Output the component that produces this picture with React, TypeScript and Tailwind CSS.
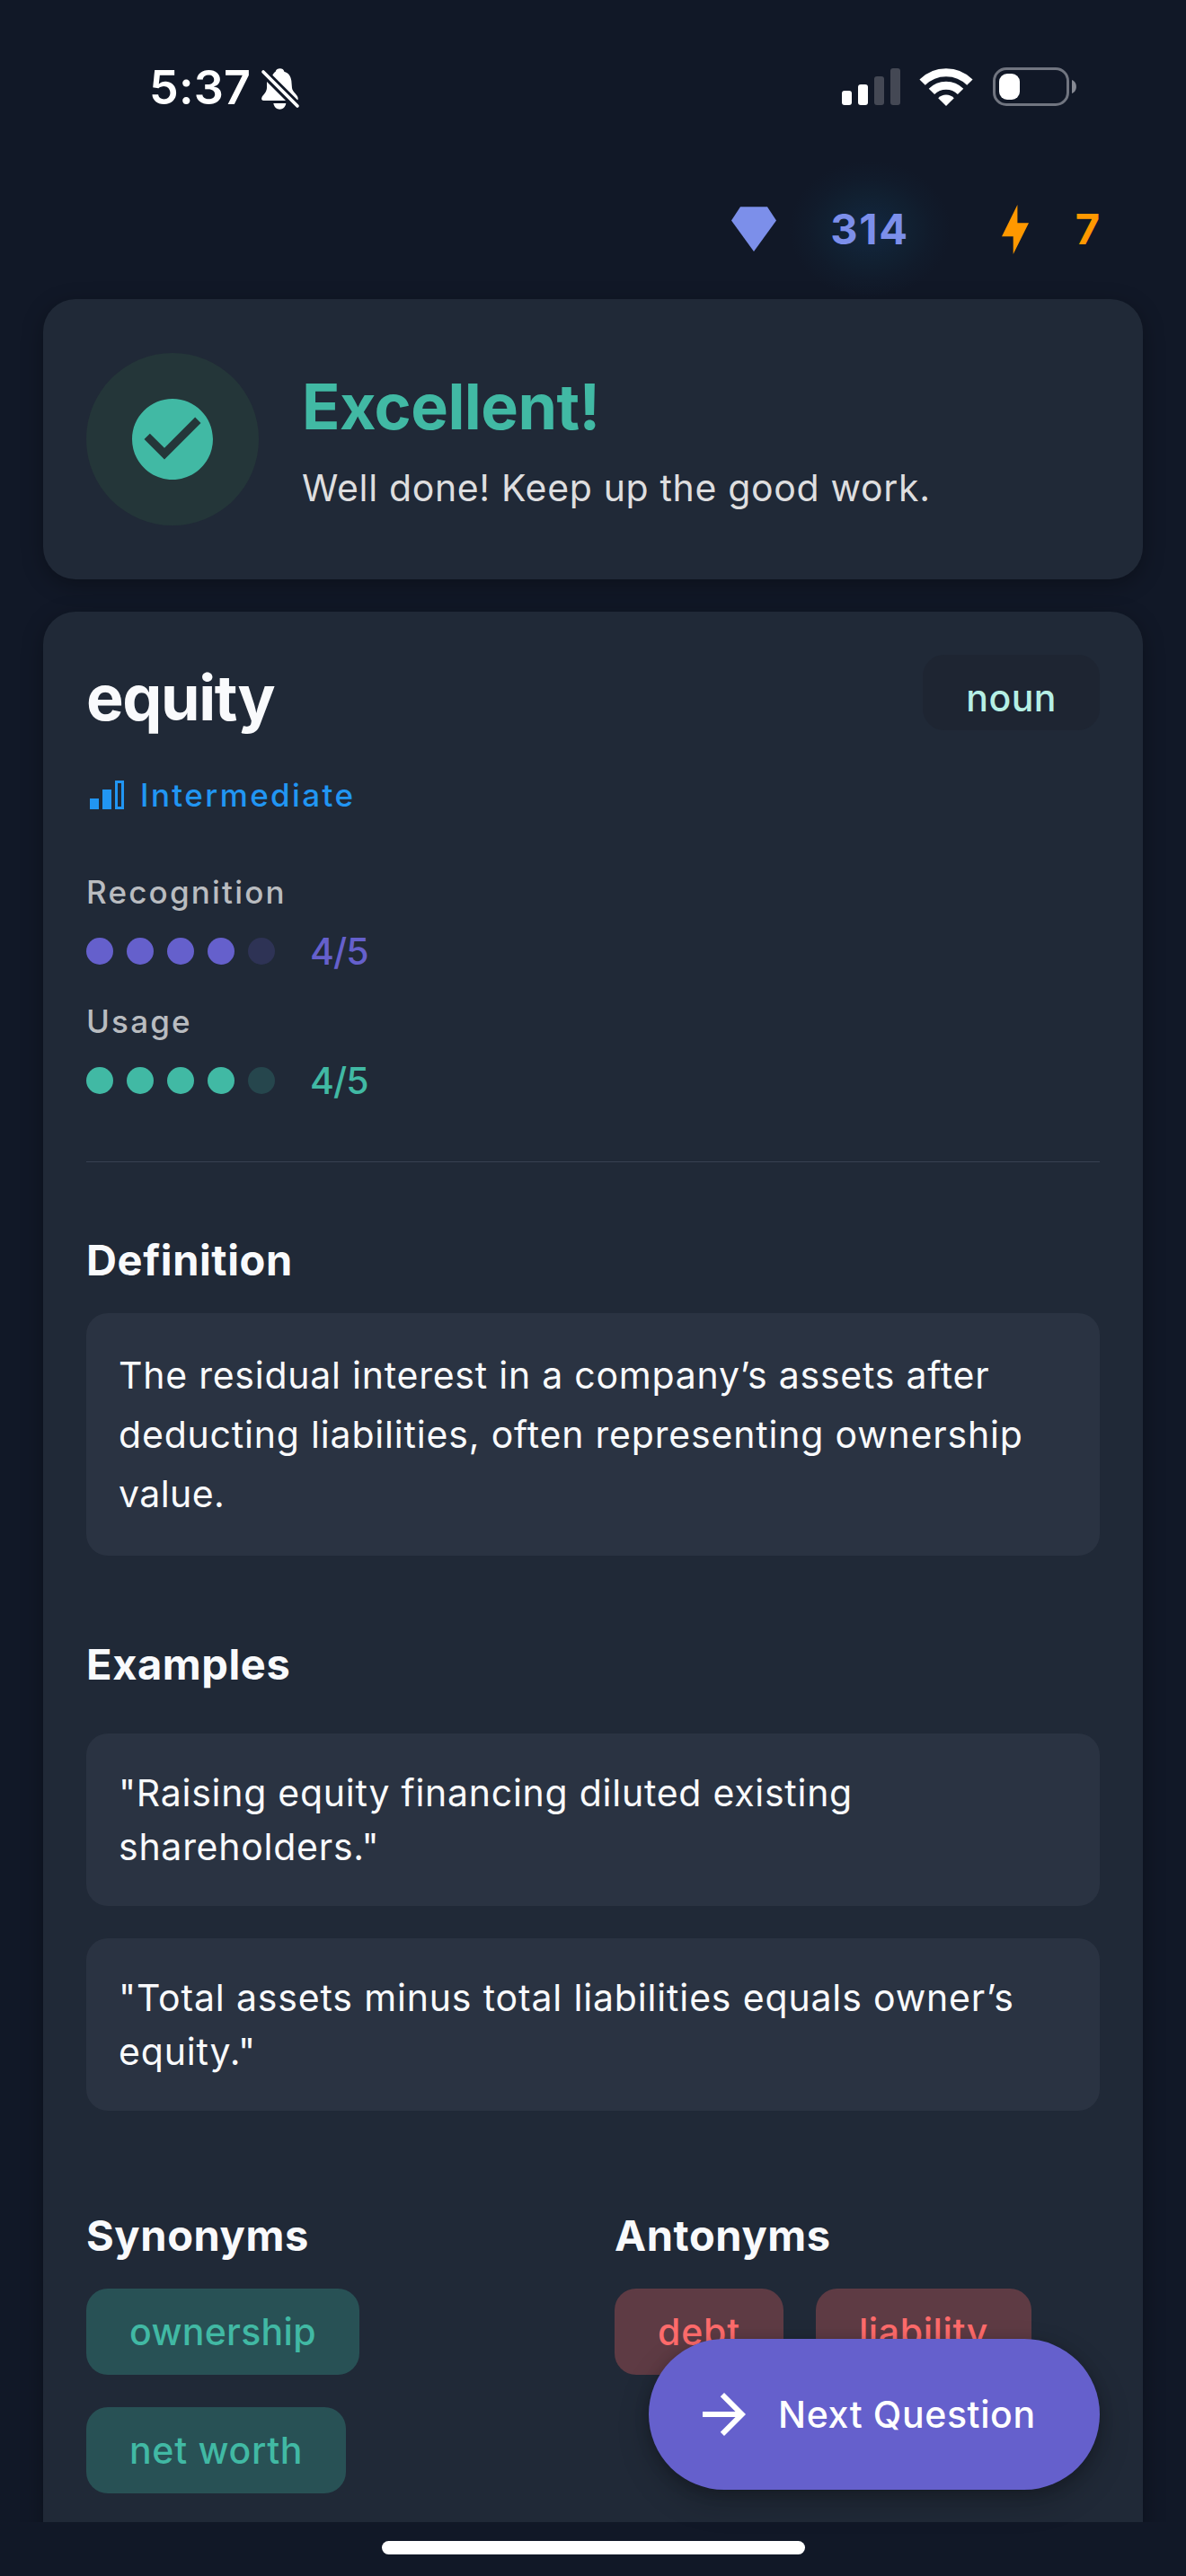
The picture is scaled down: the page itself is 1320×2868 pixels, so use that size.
import type { ReactNode } from "react";
import { MdArrowForward, MdCheckCircle } from "react-icons/md";

function BellOffIcon() {
  return (
    <svg className="h-16 w-16" viewBox="0 0 192 192" fill="#fff">
      <path d="M70 53C73 46 77 43 80 41C82 33 88 31 95 31C102 31 107 34 109 41C124 46 131 56 133 72L135 96C137 111 155 118 155 131C155 134 155 135 153 136Z" />
      <path d="M51 75L114 138H41C34 138 32 133 34 128C37 119 50 112 51 96Z" />
      <path d="M73 147H115C113 160 104 167 94 167C84 167 75 160 73 147Z" />
      <path d="M39 42L153 156" stroke="#fff" strokeWidth="11" strokeLinecap="round" />
    </svg>
  );
}

function WifiIcon() {
  return (
    <svg className="h-[42px] w-[60px]" viewBox="0 0 60 42">
      <g fill="none" stroke="#fff" strokeWidth="9">
        <path d="M3.6 15.6A37.3 37.3 0 0 1 56.4 15.6" />
        <path d="M13.9 25.9A22.7 22.7 0 0 1 46.1 25.9" />
      </g>
      <path d="M30 42L21.2 33.2A12.6 12.6 0 0 1 38.8 33.2Z" fill="#fff" />
    </svg>
  );
}

function StatusBar() {
  return (
    <div className="flex h-[180px] items-center justify-between pt-4 pr-[122px] pl-[166px]">
      <div className="flex items-center">
        <span className="w-[114px] text-[52px] leading-[60px] font-semibold tracking-[0.2px] text-white">5:37</span>
        <BellOffIcon />
      </div>
      <div className="mb-[3px] flex items-center">
        <div className="flex h-[41px] items-end gap-[7px]">
          <div className="h-4 w-[11px] rounded-[3px] bg-white" />
          <div className="h-[23px] w-[11px] rounded-[3px] bg-white" />
          <div className="h-8 w-[11px] rounded-[3px] bg-[#444854]" />
          <div className="h-[41px] w-[11px] rounded-[3px] bg-[#444854]" />
        </div>
        <div className="mr-[22px] ml-[21px]">
          <WifiIcon />
        </div>
        <div className="flex items-center">
          <div className="flex h-[43px] w-[85px] items-center rounded-[15px] border-[3.5px] border-[#717580] pl-1">
            <div className="h-[29px] w-[23px] rounded-[9px] bg-white" />
          </div>
          <svg className="ml-[3px] h-[15px] w-[5px]" viewBox="0 0 5 15">
            <path d="M0 0C6.500 2 6.500 13 0 15Z" fill="#868993" />
          </svg>
        </div>
      </div>
    </div>
  );
}

function ScoreBar() {
  return (
    <div className="flex h-[150px] items-center justify-end pr-24">
      <svg className="h-[50px] w-[50px]" viewBox="0 0 50 50">
        <path d="M10 0.300H40L50 15.500L25 50L0 15.500Z" fill="#7c8fea" />
      </svg>
      <div className="relative mr-[103px] ml-[60px]">
        <div className="absolute -inset-x-[46px] -inset-y-[48px] bg-[radial-gradient(closest-side,#122740,#112031_50%,#111b2b_75%,#11182700)]" />
        <span className="relative text-[47px] leading-[56px] font-bold tracking-[1.7px] text-[#7c8fea]">314</span>
      </div>
      <svg className="mr-[52px] h-[55px] w-[30px]" viewBox="0 0 30 55">
        <path d="M17.400 0V20.200H30L12.700 55V35.200H0Z" fill="#ff9800" />
      </svg>
      <span className="text-[47px] leading-[56px] font-bold text-[#ff9800]">7</span>
    </div>
  );
}

function ResultCard() {
  return (
    <section className="flex h-[312px] shrink-0 items-center gap-12 rounded-[36px] bg-[#202937] px-12 shadow-[0_6px_24px_rgba(0,0,0,0.3)]">
      <div className="flex h-48 w-48 items-center justify-center rounded-full bg-[#243639]">
        <MdCheckCircle className="h-[108px] w-[108px] text-[#41b9a4]" />
      </div>
      <div className="flex flex-col gap-3">
        <h1 className="text-[70px] leading-[96px] font-bold tracking-[-0.55px] text-[#41b9a4]">Excellent!</h1>
        <p className="text-[41px] leading-[60px] tracking-[0.66px] text-[#dededf]">Well done! Keep up the good work.</p>
      </div>
    </section>
  );
}

function LevelIcon() {
  return (
    <svg className="h-12 w-12" viewBox="0 0 48 48" fill="#2196f3">
      <path d="M4 28H14V40H4ZM18 18H28V40H18Z" />
      <path fillRule="evenodd" d="M32 8H42V40H32ZM35 11V37H39V11Z" />
    </svg>
  );
}

type MeterProps = { label: string; score: string; on: string; off: string; text: string };

function Meter({ label, score, on, off, text }: MeterProps) {
  return (
    <div>
      <div className="text-[35px] leading-[48px] font-medium tracking-[2.2px] text-[#b9bcc0]">{label}</div>
      <div className="mt-3 flex h-[60px] items-center gap-[15px]">
        {[0, 1, 2, 3].map((i) => (
          <div key={i} className={`h-[30px] w-[30px] rounded-full ${on}`} />
        ))}
        <div className={`h-[30px] w-[30px] rounded-full ${off}`} />
        <span className={`ml-6 text-[41px] leading-[60px] font-medium tracking-[-0.9px] ${text}`}>{score}</span>
      </div>
    </div>
  );
}

function Heading({ children }: { children: ReactNode }) {
  return <h2 className="text-[47px] leading-[72px] font-bold tracking-[0.6px] text-[#f9fafc]">{children}</h2>;
}

function Chip({ word, tone }: { word: string; tone: string }) {
  return (
    <span className={`flex h-24 items-center rounded-3xl px-12 text-[41px] leading-[60px] font-medium ${tone}`}>{word}</span>
  );
}

function WordCard() {
  return (
    <section className="flex h-[2250px] shrink-0 flex-col rounded-[36px] bg-[#202937] p-12 shadow-[0_6px_24px_rgba(0,0,0,0.3)]">
      <div className="flex items-start justify-between">
        <h1 className="text-[70px] leading-[96px] font-bold tracking-[-1.4px] text-[#f9fafc]">equity</h1>
        <div className="h-[84px] rounded-3xl bg-[#1e2532] px-12 pt-3">
          <span className="block text-[41px] leading-[72px] font-medium tracking-[0.5px] text-[#b6f0e5]">noun</span>
        </div>
      </div>
      <div className="mt-9 flex h-12 items-center gap-3">
        <LevelIcon />
        <span className="text-[35px] leading-[48px] font-medium tracking-[2.39px] text-[#2196f3]">Intermediate</span>
      </div>

      <div className="mt-[60px] flex flex-col gap-6">
        <Meter label="Recognition" score="4/5" on="bg-[#6560cc]" off="bg-[#2e3355]" text="text-[#6560cc]" />
        <Meter label="Usage" score="4/5" on="bg-[#41b9a4]" off="bg-[#26464d]" text="text-[#41b9a4]" />
      </div>

      <div className="mt-[60px] h-px bg-[#374151]" />

      <div className="mt-[73px]">
        <Heading>Definition</Heading>
        <p className="mt-[23px] rounded-3xl bg-[#2a3342] p-9 text-[41px] leading-[66px] text-[#f9fafc]">
          <span className="block tracking-[0.76px] whitespace-nowrap">The residual interest in a company’s assets after</span>
          <span className="block tracking-[0.81px] whitespace-nowrap">deducting liabilities, often representing ownership</span>
          <span className="block tracking-[0.4px] whitespace-nowrap">value.</span>
        </p>
      </div>

      <div className="mt-[85px]">
        <Heading>Examples</Heading>
        <div className="mt-[41px] flex flex-col gap-9 text-[41px] leading-[60px] text-[#f9fafc]">
          <p className="rounded-3xl bg-[#2a3342] p-9 tracking-[0.74px]">
            "Raising equity financing diluted existing
            <br />
            shareholders."
          </p>
          <p className="rounded-3xl bg-[#2a3342] p-9 tracking-[0.84px]">
            "Total assets minus total liabilities equals owner’s
            <br />
            equity."
          </p>
        </div>
      </div>

      <div className="mt-[103px] grid grid-cols-2 gap-12">
        <div>
          <Heading>Synonyms</Heading>
          <div className="mt-[23px] flex flex-col items-start gap-9">
            <Chip word="ownership" tone="bg-[#285155] text-[#41b9a4] tracking-[0.3px]" />
            <Chip word="net worth" tone="bg-[#285155] text-[#41b9a4] tracking-[0.7px]" />
          </div>
        </div>
        <div>
          <Heading>Antonyms</Heading>
          <div className="mt-[23px] flex items-start gap-9">
            <Chip word="debt" tone="bg-[#5e3b44] text-[#ff6b6b] tracking-[0.8px]" />
            <Chip word="liability" tone="bg-[#5e3b44] text-[#ff6b6b] tracking-[0.6px]" />
          </div>
        </div>
      </div>
    </section>
  );
}

export default function App() {
  return (
    <div className="relative flex h-[2868px] w-[1320px] flex-col overflow-hidden bg-[#111827] font-['Inter',sans-serif]">
      <StatusBar />
      <ScoreBar />
      <main className="-mt-10 flex min-h-0 flex-1 flex-col gap-9 overflow-hidden px-12 pt-[43px]">
        <ResultCard />
        <WordCard />
      </main>
      <footer className="flex h-[60px] shrink-0 items-start justify-center pt-[21px]">
        <div className="h-[15px] w-[471px] rounded-full bg-white" />
      </footer>
      <button className="absolute right-24 bottom-24 flex h-[168px] w-[502px] items-center gap-6 rounded-full bg-[#6560cc] pl-12 text-white shadow-[0_14px_36px_rgba(0,0,0,0.2),0_4px_16px_rgba(0,0,0,0.2)]">
        <MdArrowForward className="h-[72px] w-[72px]" />
        <span className="text-[41px] leading-[60px] font-medium tracking-[0.62px] whitespace-nowrap">Next Question</span>
      </button>
    </div>
  );
}
